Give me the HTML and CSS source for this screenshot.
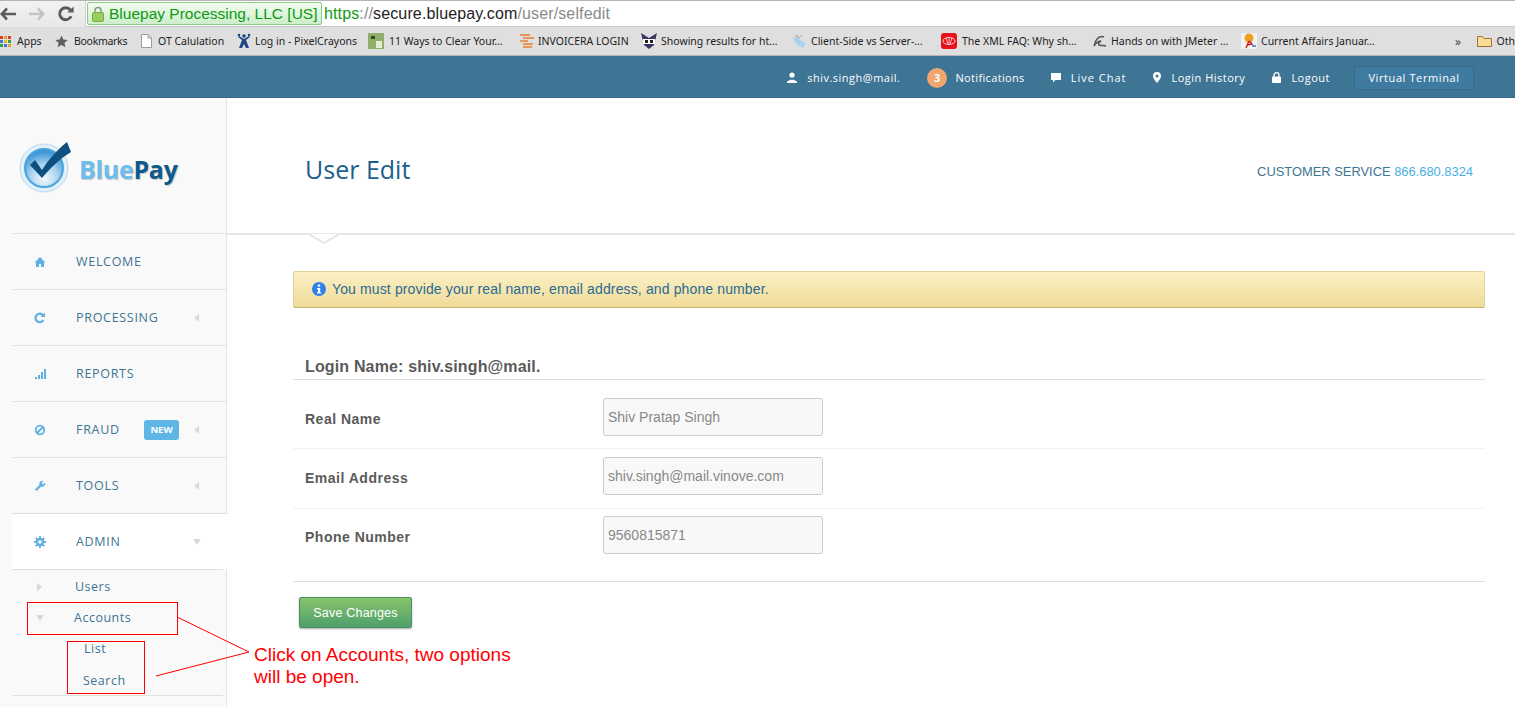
FILE: index.html
```html
<!DOCTYPE html>
<html lang="en">
  <head>
    <meta charset="UTF-8" />
    <title>BluePay - User Edit</title>
    <link rel="stylesheet" href="styles.css">
  </head>

  <body>
    <!-- browser toolbar -->
    <div class="toolbar">
      <svg class="nav-icon back" width="16" height="14" viewBox="0 0 16 14"><path d="M7 1.500 1.800 7 7 12.500M2 7h14" fill="none" stroke="#5c5c5c" stroke-width="2.600"/></svg>
      <svg class="nav-icon forward" width="16" height="14" viewBox="0 0 16 14"><path d="M9 1.500 14.200 7 9 12.500M0 7h14" fill="none" stroke="#c4c4c4" stroke-width="2.600"/></svg>
      <svg class="nav-icon reload" width="16" height="16" viewBox="0 0 16 16"><path d="M13.200 10.200A6 6 0 1 1 12.400 4" fill="none" stroke="#5c5c5c" stroke-width="2.800"/><path d="M9.400 6.400h6.200V.4z" fill="#5c5c5c"/></svg>
      <div class="omnibox">
        <div class="ev-badge">
          <svg width="12" height="16" viewBox="0 0 12 16"><path d="M3 7V4.500a3 3 0 0 1 6 0V7" fill="none" stroke="#8a9a80" stroke-width="1.500"/><rect x="0.500" y="6.500" width="11" height="9" rx="1" fill="#9ccc5c" stroke="#7aa845"/></svg>
          <span>Bluepay Processing, LLC [US]</span>
        </div>
        <div class="url"><span class="green">https</span><span class="grey">://</span>secure.bluepay.com<span class="grey">/user/selfedit</span></div>
      </div>
    </div>

    <!-- bookmarks -->
    <div class="bookmarks">
      <a class="bm bm-apps"><svg width="11" height="11" viewBox="0 0 11 11"><rect width="3" height="3" fill="#e0392b"/><rect x="4" width="3" height="3" fill="#e8a020"/><rect x="8" width="3" height="3" fill="#e0392b"/><rect y="4" width="3" height="3" fill="#3a78d8"/><rect x="4" y="4" width="3" height="3" fill="#e8c020"/><rect x="8" y="4" width="3" height="3" fill="#38a048"/><rect y="8" width="3" height="3" fill="#38a048"/><rect x="4" y="8" width="3" height="3" fill="#3a78d8"/><rect x="8" y="8" width="3" height="3" fill="#e8a020"/></svg>Apps</a>
      <a class="bm bm-marks"><svg width="13" height="13" viewBox="0 0 13 13"><path d="M6.500.5 8.300 4.600l4.400.4-3.300 2.900 1 4.300-3.900-2.300-3.900 2.300 1-4.300L.3 5l4.400-.4z" fill="#5f5f5f"/></svg>Bookmarks</a>
      <a class="bm bm-ot"><svg width="11" height="14" viewBox="0 0 11 14"><path d="M.5.500h6.500l3.500 3.500v9.500H.5z" fill="#fff" stroke="#9a9a9a"/><path d="M7 .5V4h3.500" fill="none" stroke="#9a9a9a"/></svg>OT Calulation</a>
      <a class="bm bm-pixel"><svg width="14" height="16" viewBox="0 0 14 16"><circle cx="7" cy="3" r="1.800" fill="#1c4a80"/><circle cx="2" cy="2" r="1.300" fill="#1c4a80"/><circle cx="12" cy="2" r="1.300" fill="#1c4a80"/><path d="M1 4l4 3-3 8h3l2-4 2 4h3L9 7l4-3-1-1-5 3-5-3z" fill="#1c4a80"/></svg>Log in - PixelCrayons</a>
      <a class="bm bm-ways"><svg width="16" height="16" viewBox="0 0 16 16"><rect width="16" height="16" fill="#8fae6a"/><rect x="3" y="3" width="4" height="3" fill="#39451f"/><rect x="8" y="8" width="6" height="7" fill="#e4ecd4"/></svg>11 Ways to Clear Your…</a>
      <a class="bm bm-inv"><svg width="14" height="15" viewBox="0 0 14 15"><path d="M0 1h10M3 4h11M0 7h8M3 10h10M3 13h9" stroke="#ee7b30" stroke-width="1.600"/></svg>INVOICERA LOGIN</a>
      <a class="bm bm-show"><svg width="16" height="16" viewBox="0 0 16 16"><path d="M0 0l8 5 8-5-3 12-5 4-5-4z" fill="#3a3560"/><rect x="2" y="6" width="12" height="5" fill="#fff"/><rect x="4" y="7" width="3" height="3" fill="#222"/><rect x="9" y="7" width="3" height="3" fill="#222"/></svg>Showing results for ht…</a>
      <a class="bm bm-client"><svg width="16" height="16" viewBox="0 0 16 16"><path d="M2 6l4-5 3 6 6 3-3 5-6-3z" fill="#a8d4f0"/><path d="M5 2l3 3 3-3" fill="none" stroke="#e88a6a"/></svg>Client-Side vs Server-…</a>
      <a class="bm bm-xml"><svg width="16" height="16" viewBox="0 0 16 16"><rect width="16" height="16" rx="3" fill="#e8101c"/><ellipse cx="8" cy="8" rx="6" ry="3.500" fill="none" stroke="#fff" stroke-width=".8"/><path d="M5 5l2 6M8 5v6M11 5l-2 6" stroke="#fff" stroke-width=".7"/></svg>The XML FAQ: Why sh…</a>
      <a class="bm bm-jm"><svg width="14" height="13" viewBox="0 0 14 13"><path d="M11 2C6 0 2 5 1 11c2-3 4-5 7-5-2 1-3 3-2 4 2 1 5 0 7 1" fill="none" stroke="#555" stroke-width="1.500"/></svg>Hands on with JMeter …</a>
      <a class="bm bm-cur"><svg width="16" height="16" viewBox="0 0 16 16"><rect width="16" height="16" fill="#f2f2f2"/><circle cx="8" cy="5" r="4.500" fill="#f0a020"/><path d="M8 8 5 15M8 8l3 3-5 1" fill="none" stroke="#c8202c" stroke-width="1.500"/><path d="M11 13h4" stroke="#3a70b0" stroke-width="1.500"/></svg>Current Affairs Januar…</a>
      <span class="bm-more">»</span>
      <a class="bm bm-other"><svg width="15" height="13" viewBox="0 0 15 13"><path d="M.5 11.500V1.500h5l1.500 2h7.500v8z" fill="#fbdc96" stroke="#9a7438"/></svg>Oth</a>
    </div>

    <!-- app top bar -->
    <header class="topbar">
      <a class="top-link"><svg width="10" height="11" viewBox="0 0 10 11"><circle cx="5" cy="3" r="2.600" fill="#fff"/><path d="M0 11V9.500l3.500-1.800h3L10 9.500V11z" fill="#fff"/></svg>shiv.singh@mail.</a>
      <a class="top-link notif"><span class="count">3</span>Notifications</a>
      <a class="top-link chat"><svg width="10" height="10" viewBox="0 0 10 10"><path d="M0 0h10v7H4.500L2 9.500V7H0z" fill="#fff"/></svg>Live Chat</a>
      <a class="top-link"><svg width="8" height="11" viewBox="0 0 8 11"><path fill-rule="evenodd" d="M4 0a4 4 0 0 1 4 4c0 2.500-4 7-4 7S0 6.500 0 4a4 4 0 0 1 4-4zm0 2.500a1.500 1.500 0 1 0 0 3 1.500 1.500 0 0 0 0-3z" fill="#fff"/></svg>Login History</a>
      <a class="top-link last"><svg width="9" height="11" viewBox="0 0 9 11"><path d="M2 5V3.200a2.500 2.500 0 0 1 5 0V5" fill="none" stroke="#fff" stroke-width="1.300"/><rect y="4.500" width="9" height="6.500" rx="1" fill="#fff"/></svg>Logout</a>
      <button class="vt-button">Virtual Terminal</button>
    </header>

    <div class="page">
      <aside class="sidebar">
        <div class="logo">
          <svg width="54" height="56" viewBox="0 0 54 56">
            <defs>
              <radialGradient id="ball" cx="50%" cy="78%" r="70%">
                <stop offset="0" stop-color="#f4fafe"/>
                <stop offset=".55" stop-color="#a5d2ef"/>
                <stop offset="1" stop-color="#3f96d6"/>
              </radialGradient>
            </defs>
            <circle cx="25" cy="29" r="24" fill="#e2f0fa" stroke="#bcd9ee"/>
            <circle cx="25" cy="29" r="19" fill="url(#ball)" stroke="#4ba3dd" stroke-width="2"/>
            <path d="M11 26l5-5 7 10C30 20 38 11 48 3l4 10C42 19 32 28 23 39z" fill="#0f4f80"/>
          </svg>
          <span class="logo-text"><span class="blue">Blue</span><span class="pay">Pay</span></span>
        </div>
        <nav class="menu">
          <a class="menu-item">
            <svg class="menu-icon" width="12" height="12" viewBox="0 0 12 12"><path d="M6 1 .5 6.500 2 6.500V11h3V8h2v3h3V6.500h1.500z" fill="#5fb0e0"/></svg>
            <span>WELCOME</span>
          </a>
          <a class="menu-item">
            <svg class="menu-icon" width="12" height="12" viewBox="0 0 12 12"><path d="M9.500 8.200A4.300 4.300 0 1 1 9 3" fill="none" stroke="#5fb0e0" stroke-width="2.200"/><path d="M6.500 5H11V.5z" fill="#5fb0e0"/></svg>
            <span>PROCESSING</span>
            <i class="arrow-left"></i>
          </a>
          <a class="menu-item">
            <svg class="menu-icon" width="12" height="12" viewBox="0 0 12 12"><path d="M1 9h2v2H1zM4 7h2v4H4zM7 4h2v7H7zM10 1h2v10h-2z" fill="#5fb0e0"/></svg>
            <span>REPORTS</span>
          </a>
          <a class="menu-item">
            <svg class="menu-icon" width="12" height="12" viewBox="0 0 12 12"><circle cx="6" cy="6" r="4.300" fill="none" stroke="#5fb0e0" stroke-width="1.800"/><path d="M3 9l6-6" stroke="#5fb0e0" stroke-width="1.800"/></svg>
            <span>FRAUD</span>
            <b class="badge-new">NEW</b>
            <i class="arrow-left"></i>
          </a>
          <a class="menu-item">
            <svg class="menu-icon" width="12" height="12" viewBox="0 0 12 12"><path d="M11 2.500 9 4.500 7.500 3l2-2A3 3 0 0 0 5.500 4.800L1 9.500 2.500 11l4.700-4.500A3 3 0 0 0 11 2.500z" fill="#5fb0e0"/></svg>
            <span>TOOLS</span>
            <i class="arrow-left"></i>
          </a>
          <a class="menu-item active">
            <svg class="menu-icon" width="12" height="12" viewBox="0 0 12 12"><circle cx="6" cy="6" r="3" fill="none" stroke="#5fb0e0" stroke-width="2.400"/><path d="M6 0v2.500M6 9.500V12M0 6h2.500M9.500 6H12M1.800 1.800l1.800 1.800M8.400 8.400l1.800 1.800M1.800 10.200l1.800-1.800M8.400 3.600l1.800-1.800" stroke="#5fb0e0" stroke-width="1.800"/></svg>
            <span>ADMIN</span>
            <i class="arrow-down"></i>
          </a>
        </nav>
        <ul class="submenu">
          <li class="sub-row users"><i class="arrow-right"></i>Users</li>
          <li class="sub-row accounts"><i class="arrow-down"></i>Accounts</li>
          <li class="sub-leaf list">List</li>
          <li class="sub-leaf search">Search</li>
        </ul>
      </aside>

      <main class="content">
        <div class="title-bar">
          <h1>User Edit</h1>
          <p class="service">CUSTOMER SERVICE <span>866.680.8324</span></p>
        </div>
        <div class="title-rule"><i class="notch"></i></div>

        <div class="form-area">
          <div class="alert">
            <svg width="14" height="14" viewBox="0 0 14 14"><circle cx="7" cy="7" r="7" fill="#2f80ed"/><rect x="5.800" y="2.500" width="2.400" height="2.200" fill="#fff"/><path d="M5 6h3.200v4.200h1v1.300H5v-1.300h1V7.300H5z" fill="#fff"/></svg>
            You must provide your real name, email address, and phone number.
          </div>

          <h3 class="legend">Login Name: shiv.singh@mail.</h3>

          <form>
            <div class="row">
              <label>Real Name</label>
              <input type="text" value="Shiv Pratap Singh">
            </div>
            <div class="row">
              <label>Email Address</label>
              <input type="text" value="shiv.singh@mail.vinove.com">
            </div>
            <div class="row">
              <label>Phone Number</label>
              <input type="text" value="9560815871">
            </div>
            <div class="actions">
              <button type="button" class="save">Save Changes</button>
            </div>
          </form>
        </div>
      </main>
    </div>

    <!-- red notes drawn over the screenshot -->
    <div class="note-box note-accounts"></div>
    <div class="note-box note-list"></div>
    <svg class="note-lines" width="1515" height="707" viewBox="0 0 1515 707"><path d="M177 617 249 652 156 676" fill="none" stroke="#f00"/></svg>
    <p class="note-text">Click on Accounts, two options<br>will be open.</p>
  </body>
</html>
```

FILE: styles.css
```css
* {
  box-sizing: border-box;
}
html,
body {
  margin: 0;
  height: 707px;
  overflow: hidden;
}
body {
  position: relative;
  background-color: #fff;
  font-family: "Open Sans", sans-serif;
}

/* browser */
.toolbar {
  height: 27px;
  display: flex;
  align-items: center;
  background: linear-gradient(#f2f2f2, #e8e8e8);
  border-top: 1px solid #b4b4b4;
}
.nav-icon {
  flex: none;
}
.forward {
  margin-left: 13px;
}
.reload {
  margin-left: 13px;
}
.omnibox {
  margin-left: 11px;
  flex: 1;
  height: 26px;
  display: flex;
  align-items: center;
  background-color: #fff;
  border-bottom: 1px solid #c8c8c8;
  border-left: 1px solid #d0d0d0;
  font-family: "Liberation Sans", sans-serif;
  font-size: 16px;
  white-space: nowrap;
}
.ev-badge {
  width: 235px;
  height: 23px;
  margin-left: 1px;
  padding-left: 4px;
  display: flex;
  align-items: center;
  gap: 5px;
  color: #0d9a10;
  background: linear-gradient(#f3fbf0, #cdeecb);
  border: 1px solid #8cc98c;
  border-radius: 2px;
  font-size: 15.500px;
}
.ev-badge svg {
  flex: none;
}
.url {
  margin-left: 2px;
  color: #222;
  letter-spacing: .13px;
}
.green {
  color: #0d9a10;
}
.grey {
  color: #8a8a8a;
}

.bookmarks {
  height: 29px;
  display: flex;
  align-items: center;
  background-color: #dfdfdf;
  border-bottom: 1px solid #b5b5b5;
  font-family: "Noto Sans", sans-serif;
  font-size: 10.500px;
  color: #222;
  white-space: nowrap;
}
.bm {
  display: flex;
  align-items: center;
  gap: 5px;
  flex: none;
}
.bm-apps {
  width: 55px;
  gap: 6px;
}
.bm-marks {
  width: 86px;
  gap: 6px;
  letter-spacing: -.3px;
}
.bm-ot {
  width: 96px;
  gap: 6px;
}
.bm-pixel {
  width: 131px;
  gap: 4px;
}
.bm-ways {
  width: 152px;
}
.bm-inv {
  width: 121px;
  gap: 4px;
}
.bm-show {
  width: 150px;
  gap: 4px;
}
.bm-client {
  width: 150px;
  gap: 4px;
}
.bm-xml {
  width: 152px;
}
.bm-jm {
  width: 148px;
  gap: 4px;
}
.bm-cur {
  width: 214px;
  gap: 4px;
}
.bm-more {
  width: 24px;
  font-size: 12px;
  color: #444;
}

/* top bar */
.topbar {
  height: 42px;
  padding: 2px 41px 0 0;
  display: flex;
  align-items: center;
  justify-content: flex-end;
  background-color: #3e7494;
  border-bottom: 1px solid #35678a;
  font-size: 11px;
  letter-spacing: .5px;
  color: #fff;
}
.top-link {
  margin-right: 27px;
  display: flex;
  align-items: center;
  gap: 10px;
}
.top-link.last {
  margin-right: 24px;
}
.notif {
  margin-right: 26px;
  gap: 8px;
  letter-spacing: .35px;
}
.chat {
  letter-spacing: 1px;
}
.count {
  width: 20px;
  height: 20px;
  display: flex;
  align-items: center;
  justify-content: center;
  border-radius: 50%;
  background-color: #f2a56c;
  font-weight: bold;
}
.vt-button {
  width: 120px;
  height: 24px;
  padding: 0;
  color: #fff;
  background-color: #3f7ba0;
  border: 1px solid #356a8a;
  border-radius: 2px;
  font-family: inherit;
  font-size: 11px;
  letter-spacing: .6px;
}

/* page */
.page {
  display: flex;
  height: 609px;
}
.sidebar {
  width: 227px;
  flex: none;
  background-color: #f9f9f9;
  border-right: 1px solid #e4e4e4;
}
.logo {
  height: 135px;
  padding: 41px 0 0 19px;
  display: flex;
  align-items: flex-start;
}
.logo svg {
  flex: none;
}
.logo-text {
  margin: 13px 0 0 6px;
  font-size: 25px;
  font-weight: 700;
  letter-spacing: -.3px;
  line-height: 34px;
  text-shadow: 1px 1px 1px #c8c8c8;
}
.blue {
  color: #6dbdec;
}
.pay {
  color: #0f5a8c;
}

.menu {
  margin-left: 12px;
}
.menu-item {
  height: 56px;
  padding: 0 27px 0 22px;
  display: flex;
  align-items: center;
  color: #3e7494;
  border-top: 1px solid #e0e0e0;
  font-size: 12.500px;
  letter-spacing: .7px;
}
.menu-item.active {
  background-color: #fff;
  margin-right: -1px;
}
.menu-icon {
  flex: none;
  margin-right: 30px;
}
.arrow-left {
  margin-left: auto;
  border: 4px solid transparent;
  border-left: 0;
  border-right: 5px solid #d8d8d8;
}
.arrow-down {
  margin-left: auto;
  margin-right: -1px;
  border: 4px solid transparent;
  border-bottom: 0;
  border-top: 6px solid #d8d8d8;
}
.arrow-right {
  border: 4px solid transparent;
  border-right: 0;
  border-left: 5px solid #d8d8d8;
}
.badge-new {
  width: 35px;
  height: 20px;
  margin-left: auto;
  display: flex;
  align-items: center;
  justify-content: center;
  color: #fff;
  background-color: #5fb6e5;
  border-radius: 3px;
  font-size: 9.500px;
  letter-spacing: 0;
}
.badge-new + .arrow-left {
  margin-left: 15px;
}

.submenu {
  margin: 0 3px 0 12px;
  padding: 0;
  height: 127px;
  list-style: none;
  color: #3e7494;
  border-top: 1px solid #e0e0e0;
  border-bottom: 1px solid #e0e0e0;
  font-size: 12.500px;
  letter-spacing: .5px;
}
.sub-row {
  height: 31px;
  padding-left: 25px;
  display: flex;
  align-items: center;
}
.users {
  margin-top: 1px;
}
.users .arrow-right {
  margin-right: 33px;
}
.accounts {
  padding-left: 24px;
}
.accounts .arrow-down {
  margin-left: 0;
  margin-right: 30px;
}
.sub-leaf {
  height: 32px;
  padding-left: 72px;
  display: flex;
  align-items: center;
}
.list {
  margin-top: -1px;
}
.search {
  padding-left: 71px;
}

.content {
  flex: 1;
}
.title-bar {
  height: 135px;
  padding: 7px 42px 0 78px;
  display: flex;
  align-items: center;
  justify-content: space-between;
}
h1 {
  margin: 0;
  font-size: 25px;
  font-weight: 400;
  color: #1a5f8e;
}
.service {
  margin: 4px 0 0;
  font-family: "Liberation Sans", sans-serif;
  font-size: 12.900px;
  color: #3e7494;
}
.service span {
  color: #46b0e4;
}
.title-rule {
  position: relative;
  height: 2px;
  background-color: #e6e6e6;
}
.notch {
  position: absolute;
  left: 81px;
  top: 2px;
  border: 16px solid transparent;
  border-bottom: 0;
  border-top: 9px solid #e6e6e6;
}
.notch::after {
  content: "";
  position: absolute;
  left: -13px;
  top: -10px;
  border: 13px solid transparent;
  border-bottom: 0;
  border-top: 8px solid #fff;
}
.form-area {
  padding: 36px 30px 0 66px;
}
.alert {
  height: 37px;
  padding: 0 0 2px 18px;
  display: flex;
  align-items: center;
  gap: 6px;
  color: #2a6a94;
  background: linear-gradient(#fbf0c5, #f0dc98);
  border: 1px solid #e2d29a;
  border-bottom-color: #c4b06e;
  border-radius: 2px;
  font-family: "Liberation Sans", sans-serif;
  font-size: 14px;
  letter-spacing: .13px;
}
.legend {
  margin: 48px 0 0;
  height: 24px;
  padding-left: 12px;
  color: #5a5a5a;
  border-bottom: 1px solid #dedede;
  font-family: "Liberation Sans", sans-serif;
  font-size: 16px;
  font-weight: bold;
  line-height: 22px;
  letter-spacing: .15px;
}
.row {
  height: 57px;
  padding: 0 0 2px 12px;
  display: flex;
  align-items: center;
  font-family: "Liberation Sans", sans-serif;
}
.row:nth-child(1) {
  height: 69px;
  padding: 10px 0 0 12px;
  border-bottom: 1px solid #f2f2f2;
}
.row:nth-child(2) {
  height: 60px;
  padding: 0 0 1px 12px;
  border-bottom: 1px solid #f2f2f2;
}
label {
  width: 298px;
  flex: none;
  color: #5a5a5a;
  font-size: 14px;
  font-weight: bold;
  letter-spacing: .5px;
}
input {
  width: 220px;
  height: 38px;
  margin-bottom: 4px;
  padding: 0 4px;
  color: #888;
  background-color: #f8f8f8;
  border: 1px solid #ccc;
  border-radius: 3px;
  font-family: inherit;
  font-size: 14px;
}
.actions {
  margin-top: 15px;
  padding: 15px 0 0 6px;
  border-top: 1px solid #dedede;
}
.save {
  width: 113px;
  height: 31px;
  padding: 0;
  color: #fff;
  background: linear-gradient(#86c46c, #4f9f6c);
  border: 1px solid #4e9060;
  border-radius: 2px;
  box-shadow: 0 1px 2px #aaa;
  font-family: "Liberation Sans", sans-serif;
  font-size: 12.500px;
  letter-spacing: .2px;
}

/* annotations */
.note-box {
  position: absolute;
  border: 1px solid #f00;
}
.note-accounts {
  left: 27px;
  top: 602px;
  width: 151px;
  height: 33px;
}
.note-list {
  left: 67px;
  top: 641px;
  width: 78px;
  height: 53px;
}
.note-lines {
  position: absolute;
  left: 0;
  top: 0;
  pointer-events: none;
}
.note-text {
  position: absolute;
  left: 254px;
  top: 644px;
  margin: 0;
  color: #f00;
  font-family: "Liberation Sans", sans-serif;
  font-size: 19px;
  line-height: 22px;
}
```
